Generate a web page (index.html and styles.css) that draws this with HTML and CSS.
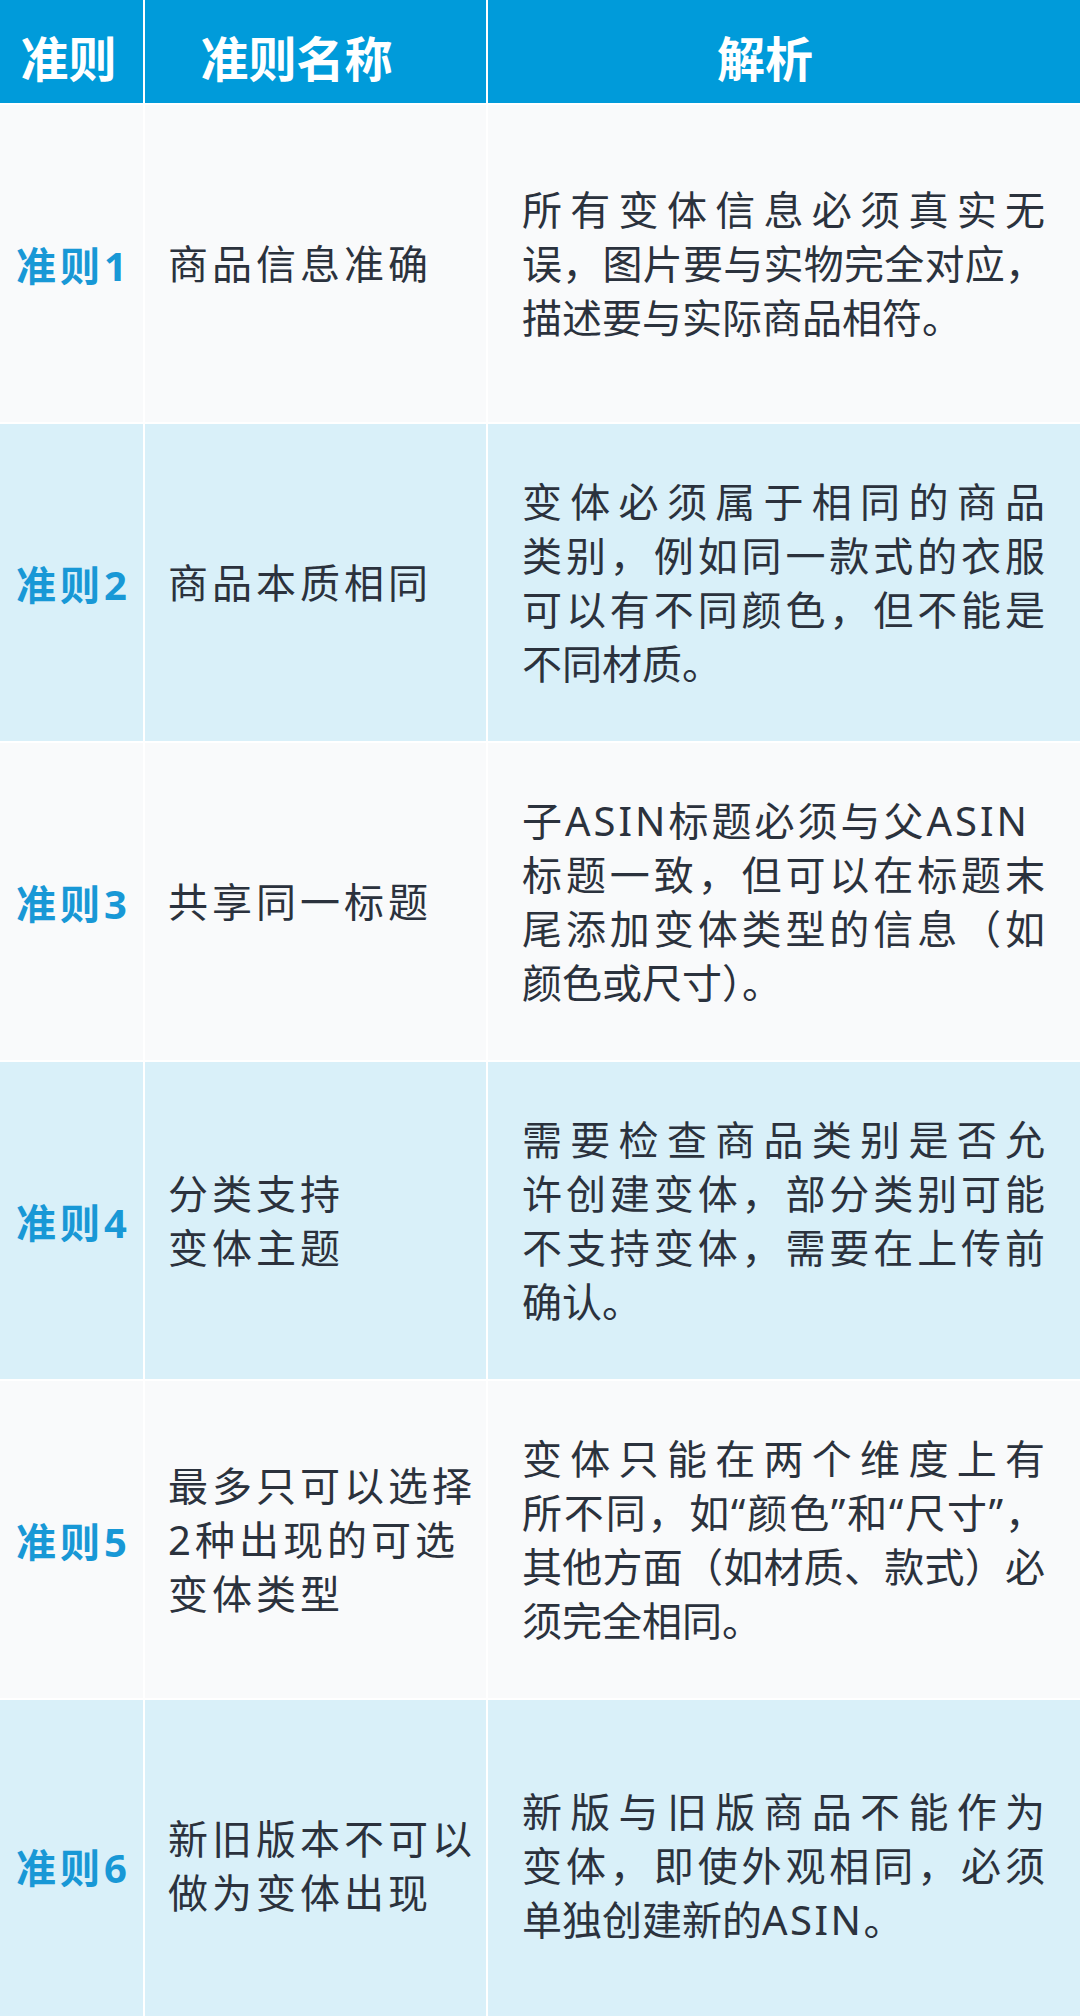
FILE: index.html
```html
<!DOCTYPE html>
<html lang="zh-CN">
<head>
<meta charset="utf-8">
<title>变体准则</title>
<link rel="stylesheet" href="styles.css">
</head>
<body>
<div class="table">
  <div class="head h1">准则</div>
  <div class="head h2">准则名称</div>
  <div class="head h3">解析</div>

  <div class="no light">准则1</div>
  <div class="name light">商品信息准确</div>
  <div class="desc light"><p>
    <span class="ln j">所有变体信息必须真实无</span>
    <span class="ln j">误，图片要与实物完全对应，</span>
    <span class="ln">描述要与实际商品相符。</span>
  </p></div>

  <div class="no blue">准则2</div>
  <div class="name blue">商品本质相同</div>
  <div class="desc blue"><p>
    <span class="ln j">变体必须属于相同的商品</span>
    <span class="ln j">类别，例如同一款式的衣服</span>
    <span class="ln j">可以有不同颜色，但不能是</span>
    <span class="ln">不同材质。</span>
  </p></div>

  <div class="no light">准则3</div>
  <div class="name light">共享同一标题</div>
  <div class="desc light"><p>
    <span class="ln sp">子<span class="en">ASIN</span>标题必须与父<span class="en">ASIN</span></span>
    <span class="ln j">标题一致，但可以在标题末</span>
    <span class="ln j">尾添加变体类型的信息（如</span>
    <span class="ln">颜色或尺寸）。</span>
  </p></div>

  <div class="no blue">准则4</div>
  <div class="name blue">分类支持<br>变体主题</div>
  <div class="desc blue"><p>
    <span class="ln j">需要检查商品类别是否允</span>
    <span class="ln j">许创建变体，部分类别可能</span>
    <span class="ln j">不支持变体，需要在上传前</span>
    <span class="ln">确认。</span>
  </p></div>

  <div class="no light">准则5</div>
  <div class="name light">最多只可以选择<br>2种出现的可选<br>变体类型</div>
  <div class="desc light"><p>
    <span class="ln j">变体只能在两个维度上有</span>
    <span class="ln j">所不同，如“颜色”和“尺寸”，</span>
    <span class="ln j">其他方面（如材质、款式）必</span>
    <span class="ln">须完全相同。</span>
  </p></div>

  <div class="no blue">准则6</div>
  <div class="name blue">新旧版本不可以<br>做为变体出现</div>
  <div class="desc blue"><p>
    <span class="ln j">新版与旧版商品不能作为</span>
    <span class="ln j">变体，即使外观相同，必须</span>
    <span class="ln">单独创建新的<span class="en">ASIN</span>。</span>
  </p></div>
</div>
</body>
</html>
```

FILE: styles.css
```css
html, body {
  margin: 0;
  padding: 0;
  background: #ffffff;
}

body {
  font-family: "Noto Sans", "Noto Sans CJK SC", sans-serif;
  color: #2b323d;
}

.table {
  display: grid;
  grid-template-columns: 143px 341px 1fr;
  grid-template-rows: 103px repeat(5, 317px) 332px;
  gap: 2px;
  width: 1080px;
  background: #ffffff;
}

.head {
  background: #009bda;
  color: #ffffff;
  font-family: "Noto Sans CJK SC", sans-serif;
  font-weight: 700;
  font-size: 48px;
  line-height: 56px;
  display: flex;
  align-items: center;
  justify-content: center;
  padding-top: 8px;
  box-sizing: border-box;
  white-space: nowrap;
}

.h1 { padding-right: 6px; }
.h2 { padding-right: 38px; }
.h3 { padding-right: 38px; }

.light { background: #f9fafb; }
.blue { background: #d9f0f9; }

.no {
  display: flex;
  align-items: center;
  justify-content: center;
  color: #1898d6;
  font-weight: 700;
  font-size: 40px;
  letter-spacing: 4px;
  white-space: nowrap;
  padding-left: 4px;
  box-sizing: border-box;
}

.name {
  display: flex;
  align-items: center;
  padding-left: 23px;
  font-size: 40px;
  line-height: 54px;
  letter-spacing: 4px;
  white-space: nowrap;
}

.desc {
  display: flex;
  align-items: center;
  padding: 0 35px 0 34px;
  box-sizing: border-box;
  font-size: 40px;
  line-height: 54px;
}

.desc p {
  margin: 0;
  width: 100%;
}

.ln {
  display: block;
  white-space: nowrap;
  text-align: left;
}

.ln.j {
  text-align: justify;
  text-align-last: justify;
  text-justify: inter-character;
}

.en {
  letter-spacing: 2.5px;
}

.ln.sp,
.ln.sp .en {
  letter-spacing: 3px;
}
```
